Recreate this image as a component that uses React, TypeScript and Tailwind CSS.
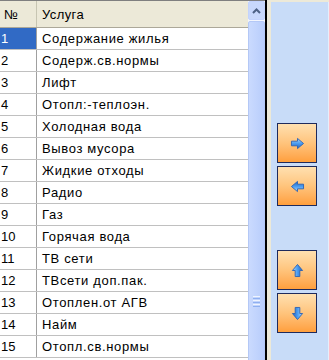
const services = [
  "Содержание жилья",
  "Содерж.св.нормы",
  "Лифт",
  "Отопл:-теплоэн.",
  "Холодная вода",
  "Вывоз мусора",
  "Жидкие отходы",
  "Радио",
  "Газ",
  "Горячая вода",
  "ТВ сети",
  "ТВсети доп.пак.",
  "Отоплен.от АГВ",
  "Найм",
  "Отопл.св.нормы",
];

type Dir = "right" | "left" | "up" | "down";

function Arrow({ dir }: { dir: Dir }) {
  const rot = { right: 0, left: 180, up: -90, down: 90 }[dir];
  return (
    <svg width="15" height="13" viewBox="0 0 16 14" style={{ transform: `rotate(${rot}deg)` }}>
      <defs>
        <linearGradient id={`g-${dir}`} x1="0" y1="0" x2="0" y2="1">
          <stop offset="0" stopColor="#a6d8ff" />
          <stop offset="0.5" stopColor="#4b9cf0" />
          <stop offset="1" stopColor="#1c62c4" />
        </linearGradient>
      </defs>
      <path
        d="M1.5 4.5 H8 V1.5 L14.5 7 L8 12.5 V9.5 H1.5 Z"
        fill={`url(#g-${dir})`}
        stroke="#2f63b3"
        strokeWidth="1"
        strokeLinejoin="round"
      />
    </svg>
  );
}

function OrangeButton({ dir }: { dir: Dir }) {
  return (
    <button className="flex h-[40px] w-[40px] items-center justify-center border border-[#1e2a5c] bg-gradient-to-b from-[#ffe0b0] via-[#ffc47c] to-[#ff9f3c]">
      <Arrow dir={dir} />
    </button>
  );
}

function Scrollbar() {
  return (
    <div className="flex h-full w-[17px] flex-col overflow-hidden bg-[#f2f5fd]">
      <div className="flex h-[19px] shrink-0 items-center justify-center rounded-[2px] border border-[#c3d3fd] bg-[#c8d8fc]">
        <svg width="9" height="6" viewBox="0 0 9 6">
          <path d="M1 5 L4.5 1.5 L8 5" fill="none" stroke="#4d6185" strokeWidth="2" />
        </svg>
      </div>
      <div className="mt-[1px] flex h-[560px] shrink-0 flex-col items-center justify-center rounded-[2px] border border-[#b4c8f6] bg-gradient-to-r from-[#cadafe] to-[#b8cdfb]">
        <div className="flex flex-col gap-[1px]">
          <div className="h-[1px] w-[7px] bg-[#eef4fe]" />
          <div className="h-[1px] w-[7px] bg-[#8fb0f0]" />
          <div className="h-[1px] w-[7px] bg-[#eef4fe]" />
          <div className="h-[1px] w-[7px] bg-[#8fb0f0]" />
          <div className="h-[1px] w-[7px] bg-[#eef4fe]" />
          <div className="h-[1px] w-[7px] bg-[#8fb0f0]" />
        </div>
      </div>
    </div>
  );
}

export default function App() {
  return (
    <div
      className="flex h-[360px] w-[329px] overflow-hidden bg-[#ece9d8] text-[13px] text-black"
      style={{ fontFamily: '"Liberation Sans", Arial, sans-serif' }}
    >
      <div className="flex w-[265px] flex-col border-t border-[#7f7f7f] bg-white">
        <div className="flex h-full">
          <div className="flex w-[248px] flex-col">
            <div className="flex h-[27px] shrink-0 border-b border-[#aca899] bg-[#ece9d8]">
              <div className="flex w-[37px] items-center border-r border-[#c7c5b2] pl-[4px] pt-[1px]">№</div>
              <div className="flex flex-1 items-center pl-[5px] pt-[1px] tracking-[0.03em]">Услуга</div>
            </div>
            {services.map((s, i) => (
              <div key={i} className="flex h-[22px] shrink-0 border-b border-[#c0c0c0]">
                <div
                  className={
                    i === 0
                      ? "flex w-[37px] items-center border-r border-[#a0a0a0] bg-[#316ac5] pl-[1px] text-white"
                      : "flex w-[37px] items-center border-r border-[#a0a0a0] pl-[1px]"
                  }
                >
                  {i + 1}
                </div>
                <div className="flex flex-1 items-center pl-[5px] tracking-[0.05em]">{s}</div>
              </div>
            ))}
          </div>
          <Scrollbar />
        </div>
      </div>
      <div className="w-[2px] bg-black" />
      <div className="w-[4px]" />
      <div className="mt-[2px] flex flex-1 flex-col gap-[3px] border-r border-[#e4eefc] bg-[#c8dcf8] pl-[6px] pt-[121px]">
        <OrangeButton dir="right" />
        <OrangeButton dir="left" />
        <div className="h-[38px]" />
        <OrangeButton dir="up" />
        <OrangeButton dir="down" />
      </div>
    </div>
  );
}
